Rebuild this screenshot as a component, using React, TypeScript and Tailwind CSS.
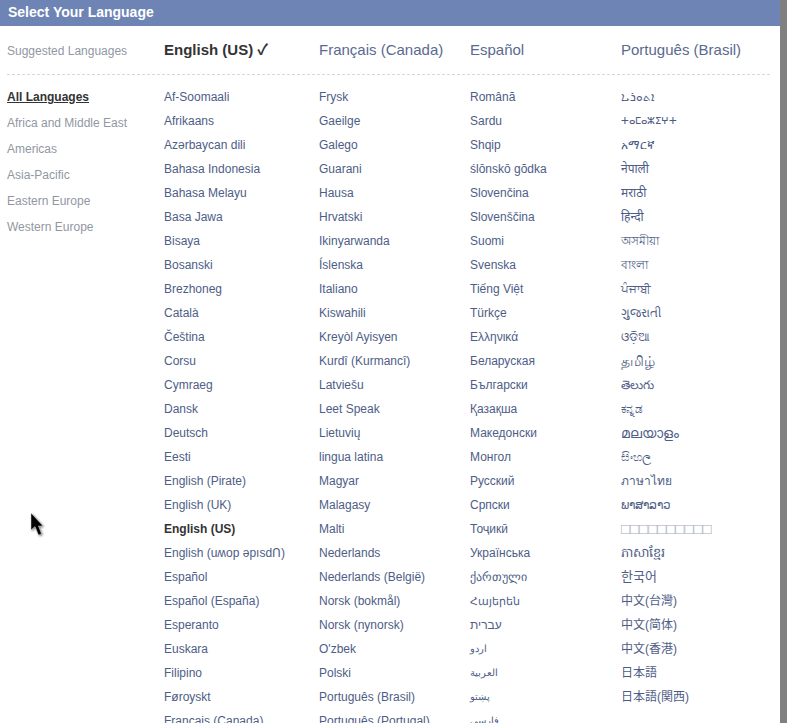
const sidebar = ["Africa and Middle East", "Americas", "Asia-Pacific", "Eastern Europe", "Western Europe"];

const suggested = ["Français (Canada)", "Español", "Português (Brasil)"];

const columns = [
  [
    "Af-Soomaali", "Afrikaans", "Azərbaycan dili", "Bahasa Indonesia", "Bahasa Melayu", "Basa Jawa", "Bisaya", "Bosanski",
    "Brezhoneg", "Català", "Čeština", "Corsu", "Cymraeg", "Dansk", "Deutsch", "Eesti", "English (Pirate)", "English (UK)",
    "English (US)", "English (uʍop ǝpısdՈ)", "Español", "Español (España)", "Esperanto", "Euskara", "Filipino", "Føroyskt",
    "Français (Canada)",
  ],
  [
    "Frysk", "Gaeilge", "Galego", "Guarani", "Hausa", "Hrvatski", "Ikinyarwanda", "Íslenska", "Italiano", "Kiswahili",
    "Kreyòl Ayisyen", "Kurdî (Kurmancî)", "Latviešu", "Leet Speak", "Lietuvių", "lingua latina", "Magyar", "Malagasy",
    "Malti", "Nederlands", "Nederlands (België)", "Norsk (bokmål)", "Norsk (nynorsk)", "O'zbek", "Polski",
    "Português (Brasil)", "Português (Portugal)",
  ],
  [
    "Română", "Sardu", "Shqip", "ślōnskō gŏdka", "Slovenčina", "Slovenščina", "Suomi", "Svenska", "Tiếng Việt", "Türkçe",
    "Ελληνικά", "Беларуская", "Български", "Қазақша", "Македонски", "Монгол", "Русский", "Српски", "Тоҷикӣ", "Українська",
    "ქართული", "Հայերեն", "עברית", "اردو", "العربية", "پښتو", "فارسی",
  ],
  [
    "ܐܬܘܪܝܐ", "ⵜⴰⵎⴰⵣⵉⵖⵜ", "አማርኛ", "नेपाली", "मराठी", "हिन्दी", "অসমীয়া", "বাংলা", "ਪੰਜਾਬੀ", "ગુજરાતી", "ଓଡ଼ିଆ", "தமிழ்", "తెలుగు",
    "ಕನ್ನಡ", "മലയാളം", "සිංහල", "ภาษาไทย", "ພາສາລາວ", "□□□□□□□□□□", "ភាសាខ្មែរ", "한국어", "中文(台灣)", "中文(简体)", "中文(香港)",
    "日本語", "日本語(関西)",
  ],
];

const colWidths = ["w-[155px]", "w-[151px]", "w-[151px]", "w-[150px]"];

// rows that render differently in the screenshot
const rowStyles: Record<string, string> = {
  "English (US)": "text-[12px] font-bold text-[#333]",
  "ⵜⴰⵎⴰⵣⵉⵖⵜ": "text-[9.5px] text-[#4e5d86]",
  "தமிழ்": "text-[14px] text-[#4e5d86]",
  "മലയാളം": "text-[14px] text-[#4e5d86]",
  "ភាសាខ្មែរ": "text-[13px] text-[#4e5d86]",
  "□□□□□□□□□□": "text-[15px] text-[#a3abc0]",
  "한국어": "text-[13px] text-[#4e5d86]",
  "Հայերեն": "text-[11px] text-[#4e5d86]",
  "اردو": "text-[10px] text-[#4e5d86]",
  "العربية": "text-[10px] text-[#4e5d86]",
  "پښتو": "text-[10px] text-[#4e5d86]",
  "فارسی": "text-[10px] text-[#4e5d86]",
};

const Cursor = () => (
  <svg className="absolute left-[29px] top-[511px] drop-shadow-[1px_1px_1px_rgba(0,0,0,0.55)]" width="22" height="30" viewBox="0 0 22 30">
    <path d="M2 2 L2 19 L6 15.5 L9.5 24 L12.5 23 L9.5 15 L14 15 Z" fill="#000" stroke="#fff" strokeWidth="0.4" />
  </svg>
);

export default function App() {
  return (
    <div className="relative h-[723px] w-[787px] overflow-hidden bg-[#808080] font-['Liberation_Sans','Noto_Sans','Noto_Sans_CJK_JP',sans-serif]">
      <div className="h-full w-[780px] bg-white">
        <div className="flex h-[26px] items-center bg-[#6d84b4] pb-[2px] pl-2 text-[14px] font-bold text-white">Select Your Language</div>

        <div className="mt-[15px] ml-[7px] mr-[10px] flex h-[34px] items-start border-b border-dashed border-[#d8d8d8]">
          <div className="w-[157px] pt-[3px] text-[12px] leading-[15px] text-[#9197a3]">Suggested Languages</div>
          <div className="w-[155px] text-[15px] leading-[18px] font-bold text-[#333]">English (US) ✓</div>
          <div className="w-[151px] text-[15px] leading-[18px] text-[#5a6a8e]">{suggested[0]}</div>
          <div className="w-[151px] text-[15px] leading-[18px] text-[#5a6a8e]">{suggested[1]}</div>
          <div className="text-[15px] leading-[18px] text-[#5a6a8e]">{suggested[2]}</div>
        </div>

        <div className="mt-[10px] ml-[7px] flex">
          <div className="w-[157px] text-[12px]">
            <div className="h-[26px] leading-[24px] font-bold text-[#333] underline">All Languages</div>
            {sidebar.map((name) => (
              <div key={name} className="h-[26px] leading-[24px] text-[#9197a3]">{name}</div>
            ))}
          </div>
          {columns.map((col, i) => (
            <div key={i} className={colWidths[i]}>
              {col.map((name) => (
                <div key={name} className={`h-[24px] leading-[24px] whitespace-nowrap ${rowStyles[name] ?? "text-[12px] text-[#4e5d86]"}`}>
                  {name}
                </div>
              ))}
            </div>
          ))}
        </div>
      </div>
      <Cursor />
    </div>
  );
}
